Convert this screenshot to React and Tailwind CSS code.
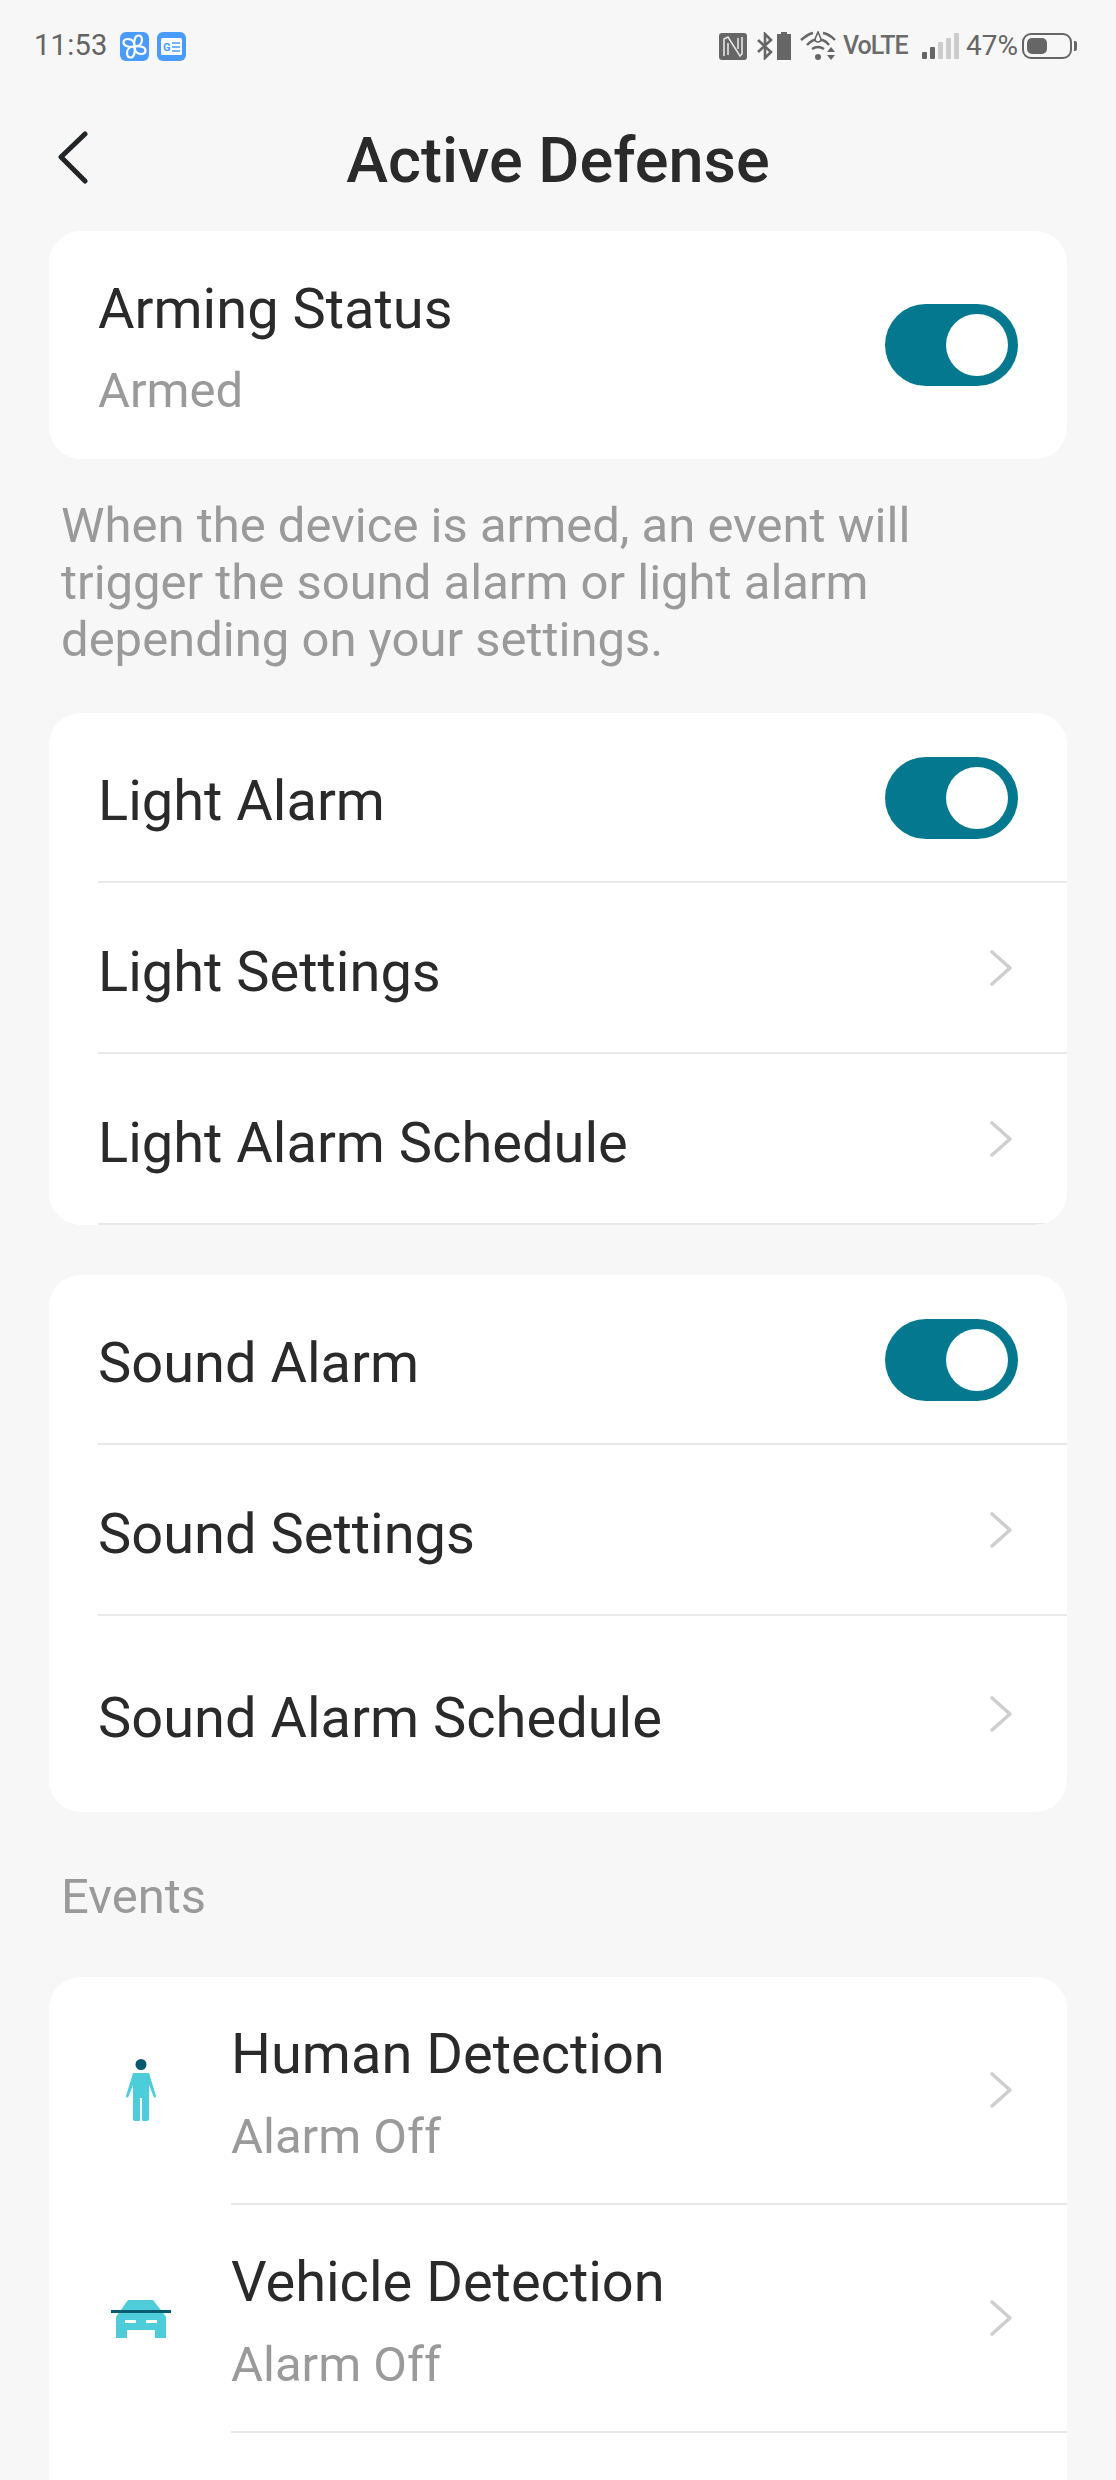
const Toggle = () => (
  <div className="w-[133px] h-[82px] rounded-full bg-[#03788f] flex items-center justify-end pr-[10px] shrink-0">
    <div className="w-[62px] h-[62px] rounded-full bg-white" />
  </div>
);

const Chevron = () => (
  <svg width="24" height="38" viewBox="0 0 24 38" fill="none" className="shrink-0">
    <path d="M3 3 L21 19 L3 35" stroke="#cfcfcf" strokeWidth="3.6" strokeLinecap="round" strokeLinejoin="round" />
  </svg>
);

const Row = ({ label, height, last, children }) => (
  <div className={`ml-[49px] pr-[31px] flex items-center justify-between ${height} ${last ? "" : "border-b-2 border-[#e9e9e9]"}`}>
    <span className="text-[56px] leading-[64px] text-[#2a2a2a] pt-[8px]">{label}</span>
    {children}
  </div>
);

const EventRow = ({ icon, label }) => (
  <div className="flex h-[228px]">
    <div className="w-[182px] shrink-0 flex items-center justify-center pl-[26px] pr-[25px]">{icon}</div>
    <div className="flex-1 flex items-center justify-between pr-[54px] border-b-2 border-[#e9e9e9]">
      <div className="pt-[6px]">
        <div className="text-[56px] leading-[64px] text-[#2a2a2a]">{label}</div>
        <div className="text-[49px] leading-[56px] text-[#9a9a9a] mt-[23px]">Alarm Off</div>
      </div>
      <Chevron />
    </div>
  </div>
);

const PersonIcon = () => (
  <svg width="32" height="64" viewBox="0 0 32 64">
    <circle cx="16" cy="5.5" r="5.5" fill="#03596d" />
    <path d="M8 14 H24 L31 37 Q31 39 29 38.5 L24 26 V60 Q24 62 22 62 H18 Q17 62 17 60 V39 H15 V60 Q15 62 14 62 H10 Q8 62 8 60 V26 L3 38.5 Q1 39 1 37 Z" fill="#4dcdd9" />
  </svg>
);

const CarIcon = () => (
  <svg width="60" height="38" viewBox="0 0 60 38">
    <path d="M17 0 H42 L53 14 L55 17 V38 H44 V30 H16 V38 H5 V17 L7 14 Z" fill="#4dcdd9" />
    <rect x="0" y="10" width="60" height="3" fill="#03596d" />
    <rect x="14" y="20" width="11" height="3" fill="#fff" />
    <rect x="35" y="20" width="11" height="3" fill="#fff" />
  </svg>
);

const StatusBar = () => (
  <div className="h-[64px] mt-[14px] flex items-center justify-between pl-[34px] pr-[39px]">
    <div className="flex items-center">
      <span className="text-[29px] text-[#636363] tracking-[0.3px]">11:53</span>
      <svg width="29" height="29" viewBox="0 0 29 29" className="ml-[12px]">
        <rect width="29" height="29" rx="6" fill="#4a9bff" />
        <g fill="none" stroke="#fff" strokeWidth="2.2" strokeLinejoin="round">
          <path d="M14.5 14.5 C9 15.5 3.5 14 3.5 10.5 C3.5 8 5.5 7 8 7 C12 7 14.5 10 14.5 14.5 Z" />
          <path d="M14.5 14.5 C13.5 9 15 3.5 18.5 3.5 C21 3.5 22 5.5 22 8 C22 12 19 14.5 14.5 14.5 Z" />
          <path d="M14.5 14.5 C20 13.5 25.5 15 25.5 18.5 C25.5 21 23.5 22 21 22 C17 22 14.5 19 14.5 14.5 Z" />
          <path d="M14.5 14.5 C15.5 20 14 25.5 10.5 25.5 C8 25.5 7 23.5 7 21 C7 17 10 14.5 14.5 14.5 Z" />
        </g>
      </svg>
      <svg width="29" height="29" viewBox="0 0 29 29" className="ml-[8px]">
        <rect width="29" height="29" rx="6" fill="#4a9bff" />
        <rect x="4" y="6" width="21" height="17" rx="1.5" fill="#fff" />
        <text x="6" y="19" fontSize="11" fontWeight="700" fontFamily="Roboto" fill="#4a9bff">G</text>
        <path d="M15 11 H23 M15 15 H23 M15 19 H23" stroke="#4a9bff" strokeWidth="1.4" />
      </svg>
    </div>
    <div className="flex items-center text-[#666666]">
      <svg width="28" height="27" viewBox="0 0 28 27">
        <rect x="0" y="0" width="28" height="27" rx="3" fill="#666" />
        <path d="M5 23 V6 L9 4 L21 23 L23 21 V4 M9 10 V22 M19 5 V16" fill="none" stroke="#e4e4e4" strokeWidth="1.6" />
      </svg>
      <svg width="18" height="28" viewBox="0 0 18 28" className="ml-[9px]">
        <path d="M2 8 L15 20 L9 26 V2 L15 8 L2 20" fill="none" stroke="#666" strokeWidth="2.6" />
      </svg>
      <svg width="14" height="28" viewBox="0 0 14 28" className="ml-[3px]">
        <path d="M4 0 H10 V2 H14 V28 H0 V2 H4 Z" fill="#666" />
      </svg>
      <svg width="36" height="30" viewBox="0 0 36 30" className="ml-[9px]">
        <path d="M1 9 Q8 3 13 2 M23 2 Q29 3 35 9 M7 14 Q12 9 15 9 M21 9 Q25 9 29 14 M12 18 Q18 14 24 18" fill="none" stroke="#666" strokeWidth="2.4" />
        <path d="M18 1 L15 8 A3 3 0 1 0 21 8 Z" fill="none" stroke="#666" strokeWidth="1.6" />
        <circle cx="18" cy="26" r="3" fill="#666" />
        <path d="M27 21 L31 16 L35 21 Z M27 24 H35 L31 29 Z" fill="#666" />
      </svg>
      <span className="ml-[7px] w-[58px] text-[25px] leading-[30px] font-medium text-[#6b6b6b] tracking-[-1px] whitespace-nowrap">VoLTE</span>
      <div className="ml-[21px] flex items-end gap-[3px] h-[26px]">
        <div className="w-[5px] h-[7px] bg-[#666] rounded-[1px]" />
        <div className="w-[5px] h-[12px] bg-[#666] rounded-[1px]" />
        <div className="w-[5px] h-[17px] bg-[#ccc] rounded-[1px]" />
        <div className="w-[5px] h-[21px] bg-[#ccc] rounded-[1px]" />
        <div className="w-[5px] h-[26px] bg-[#ccc] rounded-[1px]" />
      </div>
      <span className="ml-[7px] text-[28px] text-[#666] w-[51px] whitespace-nowrap">47%</span>
      <div className="ml-[5px] w-[50px] h-[26px] border-[2px] border-[#666] rounded-[9px] p-[3px]">
        <div className="w-[20px] h-full bg-[#666] rounded-[5px]" />
      </div>
      <div className="ml-[2px] w-[3px] h-[10px] bg-[#666] rounded-r-[2px]" />
    </div>
  </div>
);

export default function App() {
  return (
    <div className="w-[1116px] h-[2480px] overflow-hidden bg-[#f7f7f7] font-['Roboto',sans-serif]">
      <StatusBar />
      <div className="relative h-[153px] flex items-center justify-center pt-[12px]">
        <svg width="32" height="54" viewBox="0 0 32 54" fill="none" className="absolute left-[57px] top-[53px]">
          <path d="M28 3 L4 26 L28 50" stroke="#222527" strokeWidth="5" strokeLinecap="round" strokeLinejoin="round" />
        </svg>
        <h1 className="text-[63px] leading-[74px] font-medium text-[#2a2a2a]">Active Defense</h1>
      </div>

      <div className="mx-[49px]">
        <div className="bg-white rounded-[32px] h-[228px] pl-[49px] pr-[49px] flex items-center justify-between">
          <div className="pt-[5px]">
            <div className="text-[56px] leading-[64px] text-[#2a2a2a]">Arming Status</div>
            <div className="text-[49px] leading-[56px] text-[#9a9a9a] mt-[22px]">Armed</div>
          </div>
          <Toggle />
        </div>

        <p className="mt-[38px] pl-[12px] w-[920px] text-[49px] leading-[57px] text-[#9a9a9a]">
          When the device is armed, an event will trigger the sound alarm or light alarm depending on your settings.
        </p>

        <div className="mt-[45px] bg-white rounded-[32px] overflow-hidden">
          <Row label="Light Alarm" height="h-[170px]"><div className="pr-[18px] pt-[2px]"><Toggle /></div></Row>
          <Row label="Light Settings" height="h-[171px]"><div className="pr-[23px]"><Chevron /></div></Row>
          <Row label="Light Alarm Schedule" height="h-[171px]"><div className="pr-[23px]"><Chevron /></div></Row>
        </div>

        <div className="mt-[50px] bg-white rounded-[32px] overflow-hidden">
          <Row label="Sound Alarm" height="h-[170px]"><div className="pr-[18px] pt-[2px]"><Toggle /></div></Row>
          <Row label="Sound Settings" height="h-[171px]"><div className="pr-[23px]"><Chevron /></div></Row>
          <Row label="Sound Alarm Schedule" height="h-[196px]" last><div className="pr-[23px]"><Chevron /></div></Row>
        </div>

        <div className="mt-[57px] pl-[12px] text-[49px] leading-[56px] text-[#9a9a9a]">Events</div>

        <div className="mt-[52px] bg-white rounded-t-[32px] h-[600px] overflow-hidden">
          <EventRow icon={<PersonIcon />} label="Human Detection" />
          <EventRow icon={<CarIcon />} label="Vehicle Detection" />
        </div>
      </div>
    </div>
  );
}
